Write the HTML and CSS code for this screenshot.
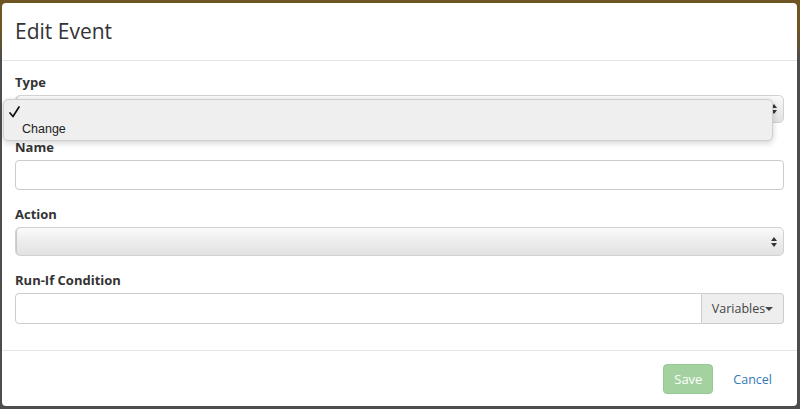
FILE: index.html
```html
<!DOCTYPE html>
<html>
<head>
<meta charset="utf-8">
<link rel="stylesheet" href="styles.css">
</head>
<body>
<div class="modal">
  <div class="modal-header">
    <h4 class="modal-title">Edit Event</h4>
  </div>
  <div class="modal-body">
    <div class="form-group">
      <label class="label">Type</label>
      <div class="select-wrap">
        <div class="select select-type">
          <svg class="arrows" width="8" height="12" viewBox="0 0 8 12"><path d="M4 1 L7 5 H1 Z M4 11 L7 7 H1 Z" fill="#333"/></svg>
        </div>
        <div class="popup">
          <div class="popup-item checked"><svg class="check" width="11" height="12" viewBox="0 0 11 12"><path d="M1 7 L4 10.5 L10 1" fill="none" stroke="#111" stroke-width="1.7" stroke-linecap="round" stroke-linejoin="round"/></svg></div>
          <div class="popup-item">Change</div>
        </div>
      </div>
    </div>
    <div class="form-group">
      <label class="label">Name</label>
      <div class="input"></div>
    </div>
    <div class="form-group">
      <label class="label">Action</label>
      <div class="select">
        <svg class="arrows" width="8" height="12" viewBox="0 0 8 12"><path d="M4 1 L7 5 H1 Z M4 11 L7 7 H1 Z" fill="#333"/></svg>
      </div>
    </div>
    <div class="form-group last">
      <label class="label">Run-If Condition</label>
      <div class="input-group">
        <div class="input grow"></div>
        <div class="addon">Variables<span class="caret"></span></div>
      </div>
    </div>
  </div>
  <div class="modal-footer">
    <button class="btn btn-save">Save</button>
    <button class="btn btn-link">Cancel</button>
  </div>
</div>
</body>
</html>
```
FILE: styles.css
```css
* { box-sizing: border-box; }
html, body { margin: 0; height: 100%; }
body {
  background: linear-gradient(180deg, #6f5522 0px, #6f5522 30px, #4d4d4d 60px, #4d4d4d 100%);
  padding: 3px 3px 3px 2px;
  font-family: "Open Sans", "Liberation Sans", sans-serif;
  color: #333;
}
.modal {
  background: #fff;
  height: 403px;
  border-radius: 4px;
  display: flex;
  flex-direction: column;
}
.modal-header {
  padding: 14px 13px 15px;
  border-bottom: 1px solid #e5e5e5;
}
.modal-title {
  margin: 0;
  font-size: 21px;
  font-weight: 400;
  line-height: 28px;
  color: #333;
}
.modal-body {
  padding: 12px 13px 12px;
  border-bottom: 1px solid #e5e5e5;
}
.form-group { margin-bottom: 15px; }
.form-group.last { margin-bottom: 14px; }
.label {
  display: block;
  font-size: 13px;
  font-weight: 700;
  line-height: 18px;
  margin-bottom: 4px;
  color: #333;
}
.select-wrap { position: relative; }
.select {
  height: 29px;
  border-radius: 5px;
  border: 1px solid #d2d2d2;
  background: linear-gradient(180deg, #fafafa 0%, #eeeeee 45%, #e2e2e2 100%);
  display: flex;
  align-items: center;
  justify-content: flex-end;
  padding-right: 5px;
  box-shadow: inset 1px 0 0 #c8c8c8;
}
.select-type { height: 28px; margin-top: 1px; }
.arrows { display: block; }
.popup {
  position: absolute;
  left: -12px;
  top: 4px;
  width: 770px;
  height: 42px;
  background: #efefef;
  border: 1px solid #cfcfcf;
  border-radius: 5px;
  box-shadow: 0 2px 6px rgba(0,0,0,0.18);
  padding-top: 4px;
  font-family: "Liberation Sans", "DejaVu Sans", sans-serif;
  font-size: 12.5px;
  color: #222;
}
.popup-item {
  height: 17px;
  line-height: 17px;
  padding-left: 18px;
}
.popup-item.checked { position: relative; }
.check {
  position: absolute;
  left: 5px;
  top: 2px;
  display: block;
}
.input {
  height: 30px;
  border: 1px solid #ccc;
  border-radius: 4px;
  background: #fff;
}
.input-group { display: flex; height: 31px; }
.input.grow {
  flex: 1;
  height: 31px;
  border-radius: 4px 0 0 4px;
}
.addon {
  width: 82px;
  border: 1px solid #ccc;
  border-left: 0;
  border-radius: 0 4px 4px 0;
  background: #eee;
  font-size: 12.5px;
  color: #444;
  display: flex;
  align-items: center;
  justify-content: center;
}
.caret {
  display: inline-block;
  width: 0; height: 0;
  border-left: 4px solid transparent;
  border-right: 4px solid transparent;
  border-top: 4px solid #444;
  margin-left: 0;
}
.modal-footer {
  display: flex;
  justify-content: flex-end;
  align-items: center;
  padding: 13px 12px 0 13px;
  gap: 7px;
}
.btn {
  font-family: "Open Sans", "Liberation Sans", sans-serif;
  font-size: 12.5px;
  height: 30px;
  border-radius: 4px;
  border: 1px solid transparent;
  cursor: pointer;
}
.btn-save {
  width: 50px;
  background: #a3d2a0;
  border-color: #98c995;
  color: #fff;
  padding: 0;
  font-size: 13px;
}
.btn-link {
  background: transparent;
  color: #337ab7;
  padding: 0 12px 0 12px;
}
```
